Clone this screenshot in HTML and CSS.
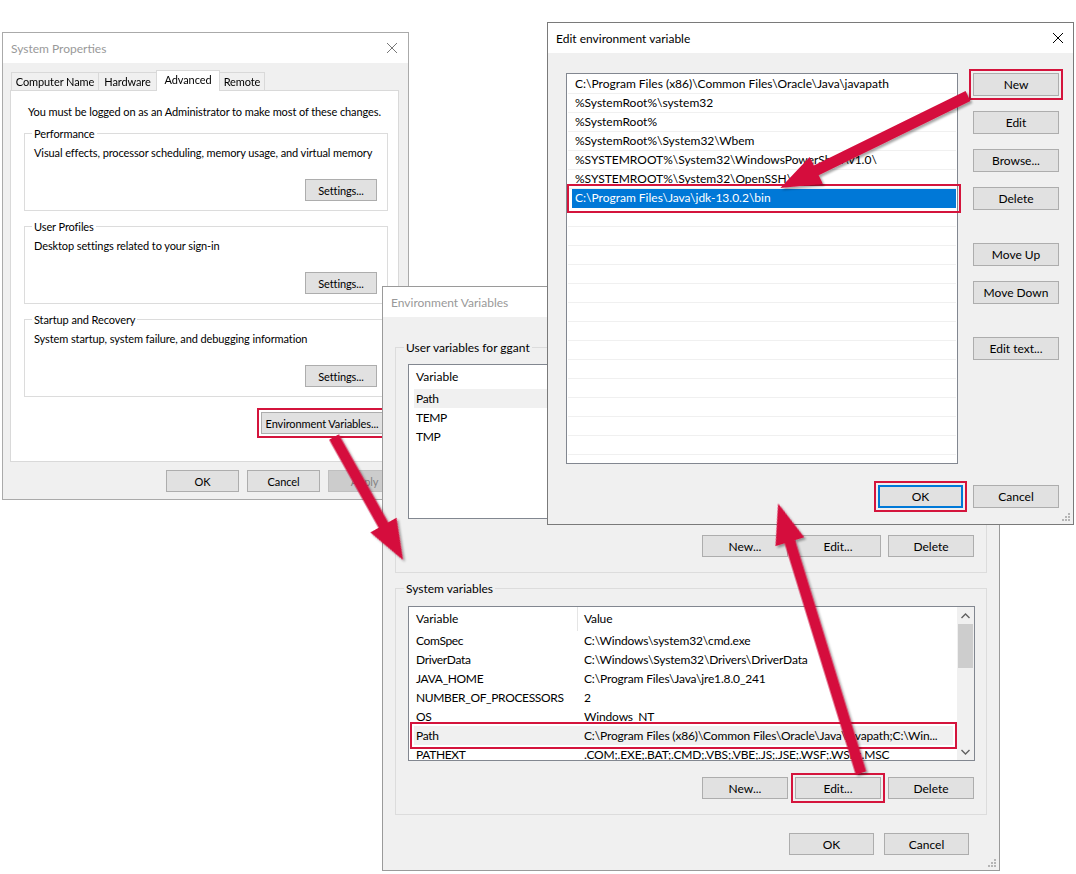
FILE: index.html
```html
<!DOCTYPE html>
<html lang="en">
<head>
  <meta charset="UTF-8">
  <meta name="viewport" content="width=device-width, initial-scale=1.0">
  <link rel="stylesheet" href="styles.css">
  <title>Java Path - Environment Variables</title>
</head>
<body>
<div class="desktop">

  <!-- System Properties (back) -->
  <div class="win sysprops">
    <div class="titlebar">
      <span class="title">System Properties</span>
      <svg class="closex" viewBox="0 0 10 10"><path d="M0 0L10 10M10 0L0 10"/></svg>
    </div>
    <div class="winbody">
      <div class="tabs">
        <div class="tab">Computer Name</div>
        <div class="tab">Hardware</div>
        <div class="tab active">Advanced</div>
        <div class="tab">Remote</div>
      </div>
      <div class="tabpanel">
        <p class="note">You must be logged on as an Administrator to make most of these changes.</p>
        <fieldset class="group">
          <legend>Performance</legend>
          <p>Visual effects, processor scheduling, memory usage, and virtual memory</p>
          <div class="btnrow"><button class="btn">Settings...</button></div>
        </fieldset>
        <fieldset class="group">
          <legend>User Profiles</legend>
          <p>Desktop settings related to your sign-in</p>
          <div class="btnrow"><button class="btn">Settings...</button></div>
        </fieldset>
        <fieldset class="group">
          <legend>Startup and Recovery</legend>
          <p>System startup, system failure, and debugging information</p>
          <div class="btnrow"><button class="btn">Settings...</button></div>
        </fieldset>
        <div class="btnrow envrow"><button class="btn envbtn marked">Environment Variables...</button></div>
      </div>
      <div class="footer">
        <button class="btn">OK</button>
        <button class="btn">Cancel</button>
        <button class="btn" disabled>Apply</button>
      </div>
    </div>
  </div>

  <!-- Environment Variables (middle) -->
  <div class="win envvars">
    <div class="titlebar">
      <span class="title">Environment Variables</span>
    </div>
    <div class="winbody">
      <fieldset class="group vars">
        <legend>User variables for ggant</legend>
        <div class="listview uservars">
          <div class="lvrows">
            <div class="lvhead"><span class="col1">Variable</span></div>
            <div class="lvrow sel"><span class="col1">Path</span></div>
            <div class="lvrow"><span class="col1">TEMP</span></div>
            <div class="lvrow"><span class="col1">TMP</span></div>
          </div>
        </div>
        <div class="btnrow">
          <button class="btn">New...</button>
          <button class="btn">Edit...</button>
          <button class="btn">Delete</button>
        </div>
      </fieldset>
      <fieldset class="group vars">
        <legend>System variables</legend>
        <div class="listview sysvars">
          <div class="lvrows">
            <div class="lvhead"><span class="col1">Variable</span><span class="col2">Value</span></div>
            <div class="lvrow"><span class="col1">ComSpec</span><span class="col2">C:\Windows\system32\cmd.exe</span></div>
            <div class="lvrow"><span class="col1">DriverData</span><span class="col2">C:\Windows\System32\Drivers\DriverData</span></div>
            <div class="lvrow"><span class="col1">JAVA_HOME</span><span class="col2">C:\Program Files\Java\jre1.8.0_241</span></div>
            <div class="lvrow"><span class="col1">NUMBER_OF_PROCESSORS</span><span class="col2">2</span></div>
            <div class="lvrow"><span class="col1">OS</span><span class="col2">Windows_NT</span></div>
            <div class="lvrow sel marked"><span class="col1">Path</span><span class="col2">C:\Program Files (x86)\Common Files\Oracle\Java\javapath;C:\Win...</span></div>
            <div class="lvrow"><span class="col1">PATHEXT</span><span class="col2">.COM;.EXE;.BAT;.CMD;.VBS;.VBE;.JS;.JSE;.WSF;.WSH;.MSC</span></div>
          </div>
          <div class="vscroll">
            <svg class="sarrow" viewBox="0 0 9 6"><polyline points="0.5,5 4.5,1 8.5,5"/></svg>
            <div class="thumb"></div>
            <div class="track"></div>
            <svg class="sarrow" viewBox="0 0 9 6"><polyline points="0.5,1 4.5,5 8.5,1"/></svg>
          </div>
        </div>
        <div class="btnrow">
          <button class="btn">New...</button>
          <button class="btn marked">Edit...</button>
          <button class="btn">Delete</button>
        </div>
      </fieldset>
      <div class="footer">
        <button class="btn">OK</button>
        <button class="btn">Cancel</button>
      </div>
    </div>
    <svg class="grip" viewBox="0 0 10 10"><path d="M7 7h2v2H7zM7 4h2v2H7zM4 7h2v2H4zM7 1h2v2H7zM4 4h2v2H4zM1 7h2v2H1z"/></svg>
  </div>

  <!-- Edit environment variable (front) -->
  <div class="win editvar">
    <div class="titlebar">
      <span class="title">Edit environment variable</span>
      <svg class="closex" viewBox="0 0 10 10"><path d="M0 0L10 10M10 0L0 10"/></svg>
    </div>
    <div class="winbody">
      <div class="editmain">
        <div class="editlist">
          <div class="erow">C:\Program Files (x86)\Common Files\Oracle\Java\javapath</div>
          <div class="erow">%SystemRoot%\system32</div>
          <div class="erow">%SystemRoot%</div>
          <div class="erow">%SystemRoot%\System32\Wbem</div>
          <div class="erow">%SYSTEMROOT%\System32\WindowsPowerShell\v1.0\</div>
          <div class="erow">%SYSTEMROOT%\System32\OpenSSH\</div>
          <div class="erow sel">C:\Program Files\Java\jdk-13.0.2\bin</div>
          <div class="erow"></div><div class="erow"></div><div class="erow"></div>
          <div class="erow"></div><div class="erow"></div><div class="erow"></div>
          <div class="erow"></div><div class="erow"></div><div class="erow"></div>
          <div class="erow"></div><div class="erow"></div><div class="erow"></div>
          <div class="erow"></div>
        </div>
        <div class="editbtns">
          <button class="btn marked">New</button>
          <button class="btn">Edit</button>
          <button class="btn">Browse...</button>
          <button class="btn">Delete</button>
          <button class="btn gapabove">Move Up</button>
          <button class="btn">Move Down</button>
          <button class="btn gapabove">Edit text...</button>
        </div>
      </div>
      <div class="footer">
        <button class="btn default marked">OK</button>
        <button class="btn">Cancel</button>
      </div>
    </div>
    <svg class="grip" viewBox="0 0 10 10"><path d="M7 7h2v2H7zM7 4h2v2H7zM4 7h2v2H4zM7 1h2v2H7zM4 4h2v2H4zM1 7h2v2H1z"/></svg>
  </div>

  <!-- callout arrows drawn over the screenshots -->
  <svg class="arrows" viewBox="0 0 1076 874">
    <defs>
      <filter id="shade" x="-20%" y="-20%" width="140%" height="140%">
        <feDropShadow dx="2" dy="2" stdDeviation="1.2" flood-color="#000" flood-opacity="0.35"/>
      </filter>
    </defs>
    <g filter="url(#shade)" fill="#d50c3c">
      <polygon transform="translate(968 96) rotate(153.9)" points="0,-5.5 169,-5.5 169,-15 209,0 169,15 169,5.5 0,5.5"/>
      <polygon transform="translate(334 437) rotate(60.7)" points="0,-5.5 101,-5.5 101,-15 141,0 101,15 101,5.5 0,5.5"/>
      <polygon transform="translate(861 773) rotate(-107.1)" points="0,-5.5 242,-5.5 242,-15 282,0 242,15 242,5.5 0,5.5"/>
    </g>
  </svg>

</div>
</body>
</html>
```

FILE: styles.css
```css
* {
  box-sizing: border-box;
}
body {
  margin: 0;
  background: #fff;
  font: 12px "Segoe UI", Lato, sans-serif;
  color: #000;
}
.desktop {
  position: relative;
  width: 1076px;
  height: 874px;
  overflow: hidden;
}

/* windows */
.win {
  position: absolute;
  display: flex;
  flex-direction: column;
  background: #f0f0f0;
  border: 1px solid #aaa;
}
.sysprops {
  left: 2px;
  top: 32px;
  width: 407px;
  height: 468px;
  font-size: 11px;
  letter-spacing: -0.1px;
}
.envvars {
  left: 382px;
  top: 286px;
  width: 618px;
  height: 585px;
  border-color: #9a9a9a;
}
.editvar {
  left: 547px;
  top: 22px;
  width: 527px;
  height: 503px;
  border-color: #7a7a7a;
}
.titlebar {
  height: 30px;
  flex: none;
  background: #fff;
  display: flex;
  align-items: center;
  justify-content: space-between;
  padding: 0 11px 0 8px;
  line-height: 15px;
  font-size: 12px;
  letter-spacing: 0;
}
.title {
  color: #999;
}
.editvar .title {
  color: #000;
}
.closex {
  width: 10px;
  height: 10px;
  stroke: #777;
  stroke-width: 1;
}
.editvar .titlebar {
  padding-right: 10px;
}
.editvar .closex {
  stroke: #000;
}
.winbody {
  flex: 1;
  display: flex;
  flex-direction: column;
}
.grip {
  position: absolute;
  right: 2px;
  bottom: 2px;
  width: 10px;
  height: 10px;
  fill: #b5b5b5;
}

/* buttons */
.btn {
  font: inherit;
  letter-spacing: inherit;
  color: #000;
  background: #e1e1e1;
  border: 1px solid #adadad;
  border-radius: 0;
  height: 22px;
  padding: 0;
  line-height: 15px;
  white-space: nowrap;
}
.btn:disabled {
  background: #ccc;
  border-color: #bfbfbf;
  color: #838383;
}
.btn.default {
  border: 2px solid #0078d7;
}
.marked {
  outline: 2px solid #d4143c;
  outline-offset: 2px;
}
.btnrow {
  display: flex;
  justify-content: flex-end;
  gap: 8px;
}
.footer {
  display: flex;
  justify-content: flex-end;
  gap: 8px;
}

/* group boxes */
.group {
  margin: 0 0 8px;
  border: 1px solid #dcdcdc;
  padding: 0 10px 9px 9px;
  min-width: 0;
}
.group legend {
  padding: 0 2px;
  margin-left: -2px;
  line-height: 15px;
}
.group p {
  margin: 4px 0 19px;
  line-height: 15px;
  white-space: nowrap;
}

/* system properties */
.sysprops .winbody {
  padding: 7px 9px 0 7px;
}
.tabs {
  display: flex;
  align-items: flex-end;
  height: 21px;
  margin-bottom: -1px;
  padding-left: 1px;
  position: relative;
  z-index: 1;
}
.tab {
  flex: none;
  height: 18px;
  margin: 0 -1px 1px 0;
  line-height: 17px;
  text-align: center;
  border: 1px solid #d9d9d9;
  border-bottom: none;
}
.tab:nth-child(1) {
  width: 88px;
}
.tab:nth-child(2) {
  width: 59px;
}
.tab:nth-child(3) {
  width: 64px;
}
.tab:nth-child(4) {
  width: 46px;
}
.tab.active {
  height: 21px;
  margin-bottom: 0;
  background: #fff;
  line-height: 18px;
  position: relative;
}
.tabpanel {
  height: 372px;
  background: #fff;
  border: 1px solid #d9d9d9;
  padding: 13px 10px 0 13px;
}
.note {
  margin: 0 0 7px 4px;
  line-height: 15px;
  white-space: nowrap;
}
.sysprops .group .btn {
  width: 72px;
}
.envrow {
  margin: 15px 5px 0 0;
}
.envbtn {
  width: 122px;
}
.sysprops .footer {
  margin: 8px -2px 0 0;
}
.sysprops .footer .btn {
  width: 73px;
}

/* environment variables */
.envvars .winbody {
  padding: 23px 12px 0;
}
.vars {
  padding: 0 11px 15px 12px;
}
.vars legend {
  margin-left: -4px;
}
.vars .btnrow {
  margin-top: 16px;
  gap: 7px;
  margin-right: 1px;
}
.vars .btn {
  width: 86px;
}
.listview {
  display: flex;
  height: 155px;
  background: #fff;
  border: 1px solid #828790;
  overflow: hidden;
  margin-top: 9px;
}
.sysvars {
  margin-top: 10px;
}
.lvrows {
  flex: 1;
  min-width: 0;
  padding: 0 4px 0 5px;
}
.lvhead {
  display: flex;
  height: 24px;
  line-height: 24px;
}
.lvrow {
  display: flex;
  height: 19px;
  line-height: 19px;
  white-space: nowrap;
}
.lvrow.sel {
  background: #f0f0f0;
}
.col1 {
  width: 164px;
  flex: none;
  padding-left: 2px;
  letter-spacing: -0.35px;
}
.lvhead .col1 {
  border-right: 1px solid #e5e5e5;
  letter-spacing: 0;
}
.col2 {
  flex: 1;
  min-width: 0;
  padding-left: 6px;
  overflow: hidden;
  letter-spacing: -0.15px;
}
.vscroll {
  width: 17px;
  flex: none;
  background: #f0f0f0;
  display: flex;
  flex-direction: column;
  align-items: center;
}
.sarrow {
  width: 9px;
  height: 6px;
  margin: 6px 0 5px;
  fill: none;
  stroke: #606060;
  stroke-width: 1.4;
}
.thumb {
  width: 15px;
  height: 44px;
  background: #cdcdcd;
}
.track {
  flex: 1;
}
.envvars .footer {
  margin-top: 10px;
  gap: 10px;
  padding-right: 18px;
}
.envvars .footer .btn {
  width: 85px;
}

/* edit environment variable */
.editvar .winbody {
  padding: 20px 14px 0 18px;
}
.editmain {
  display: flex;
  gap: 15px;
}
.editlist {
  width: 392px;
  height: 391px;
  background: #fff;
  border: 1px solid #828790;
  padding: 1px 1px 0;
}
.erow {
  height: 19px;
  line-height: 18px;
  border-bottom: 1px solid #f0f0f0;
  padding-left: 7px;
  white-space: nowrap;
}
.erow.sel {
  background: #0078d7;
  border-bottom-color: #0078d7;
  color: #fff;
  margin-left: 4px;
  padding-left: 3px;
  outline: 2px solid #d4143c;
  outline-offset: 3px;
}
.editbtns {
  display: flex;
  flex-direction: column;
  width: 86px;
}
.editbtns .btn {
  height: 23px;
  margin-top: 15px;
}
.editbtns .btn:first-child {
  margin-top: 0;
}
.editbtns .gapabove {
  margin-top: 33px;
}
.editvar .footer {
  margin-top: 21px;
  gap: 10px;
}
.editvar .footer .btn {
  width: 86px;
  height: 23px;
}
.editvar .footer .default {
  width: 85px;
}

/* arrows */
.arrows {
  position: absolute;
  left: 0;
  top: 0;
  width: 1076px;
  height: 874px;
  pointer-events: none;
}
```
